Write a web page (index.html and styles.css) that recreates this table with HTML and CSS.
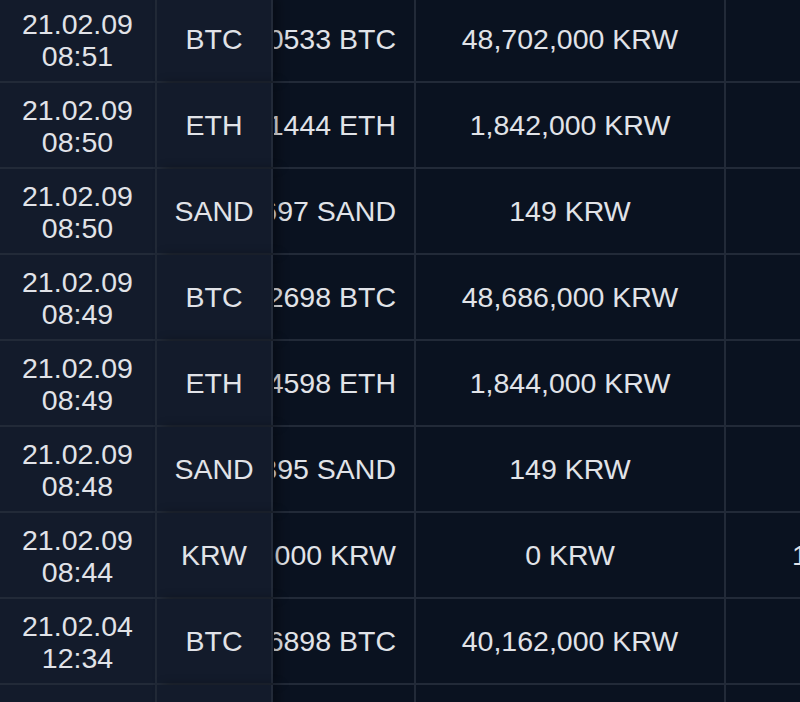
FILE: index.html
```html
<!DOCTYPE html>
<html>
<head>
<meta charset="utf-8">
<link rel="stylesheet" href="styles.css">
</head>
<body>
<div class="table">
  <div class="row">
    <div class="cell date">21.02.09<br>08:51</div>
    <div class="cell coin">BTC</div>
    <div class="cell amount"><span>0.00100533 BTC</span></div>
    <div class="cell price">48,702,000 KRW</div>
    <div class="cell extra"></div>
  </div>
  <div class="row">
    <div class="cell date">21.02.09<br>08:50</div>
    <div class="cell coin">ETH</div>
    <div class="cell amount"><span>0.02711444 ETH</span></div>
    <div class="cell price">1,842,000 KRW</div>
    <div class="cell extra"></div>
  </div>
  <div class="row">
    <div class="cell date">21.02.09<br>08:50</div>
    <div class="cell coin">SAND</div>
    <div class="cell amount"><span>335.55369697 SAND</span></div>
    <div class="cell price">149 KRW</div>
    <div class="cell extra"></div>
  </div>
  <div class="row">
    <div class="cell date">21.02.09<br>08:49</div>
    <div class="cell coin">BTC</div>
    <div class="cell amount"><span>0.00102698 BTC</span></div>
    <div class="cell price">48,686,000 KRW</div>
    <div class="cell extra"></div>
  </div>
  <div class="row">
    <div class="cell date">21.02.09<br>08:49</div>
    <div class="cell coin">ETH</div>
    <div class="cell amount"><span>0.02714598 ETH</span></div>
    <div class="cell price">1,844,000 KRW</div>
    <div class="cell extra"></div>
  </div>
  <div class="row">
    <div class="cell date">21.02.09<br>08:48</div>
    <div class="cell coin">SAND</div>
    <div class="cell amount"><span>335.57383395 SAND</span></div>
    <div class="cell price">149 KRW</div>
    <div class="cell extra"></div>
  </div>
  <div class="row">
    <div class="cell date">21.02.09<br>08:44</div>
    <div class="cell coin">KRW</div>
    <div class="cell amount"><span>200,000 KRW</span></div>
    <div class="cell price">0 KRW</div>
    <div class="cell extra"><span class="extra-text">100,000 KRW</span></div>
  </div>
  <div class="row">
    <div class="cell date">21.02.04<br>12:34</div>
    <div class="cell coin">BTC</div>
    <div class="cell amount"><span>0.00246898 BTC</span></div>
    <div class="cell price">40,162,000 KRW</div>
    <div class="cell extra"></div>
  </div>
  <div class="row">
    <div class="cell date"></div>
    <div class="cell coin"></div>
    <div class="cell amount"></div>
    <div class="cell price"></div>
    <div class="cell extra"></div>
  </div>
</div>
</body>
</html>
```

FILE: styles.css
```css
html, body {
  margin: 0;
  padding: 0;
  background: #0a1220;
  overflow: hidden;
}

body {
  width: 800px;
  height: 702px;
  font-family: "Liberation Sans", Arial, sans-serif;
  font-size: 28.5px;
  color: #e1e3e8;
}

.table {
  margin-top: -3px;
}

.row {
  display: grid;
  grid-template-columns: 157px 116px 143px 310px 1fr;
  height: 86px;
  box-sizing: border-box;
  border-bottom: 2px solid #222a38;
}

.cell {
  box-sizing: border-box;
  border-right: 2px solid #222a38;
  display: flex;
  align-items: center;
  justify-content: center;
  text-align: center;
  white-space: nowrap;
  overflow: hidden;
  line-height: 32px;
}

.date,
.coin {
  background: #131b2b;
}

.date {
  padding-top: 2px;
}

.coin {
  box-shadow: 6px 0 10px rgba(0, 0, 0, 0.3);
  position: relative;
  z-index: 1;
}

.amount {
  justify-content: flex-end;
  padding-right: 18px;
  border-left: 1px solid transparent;
}

.extra {
  border-right: none;
  justify-content: flex-start;
  padding-left: 66px;
}
```
